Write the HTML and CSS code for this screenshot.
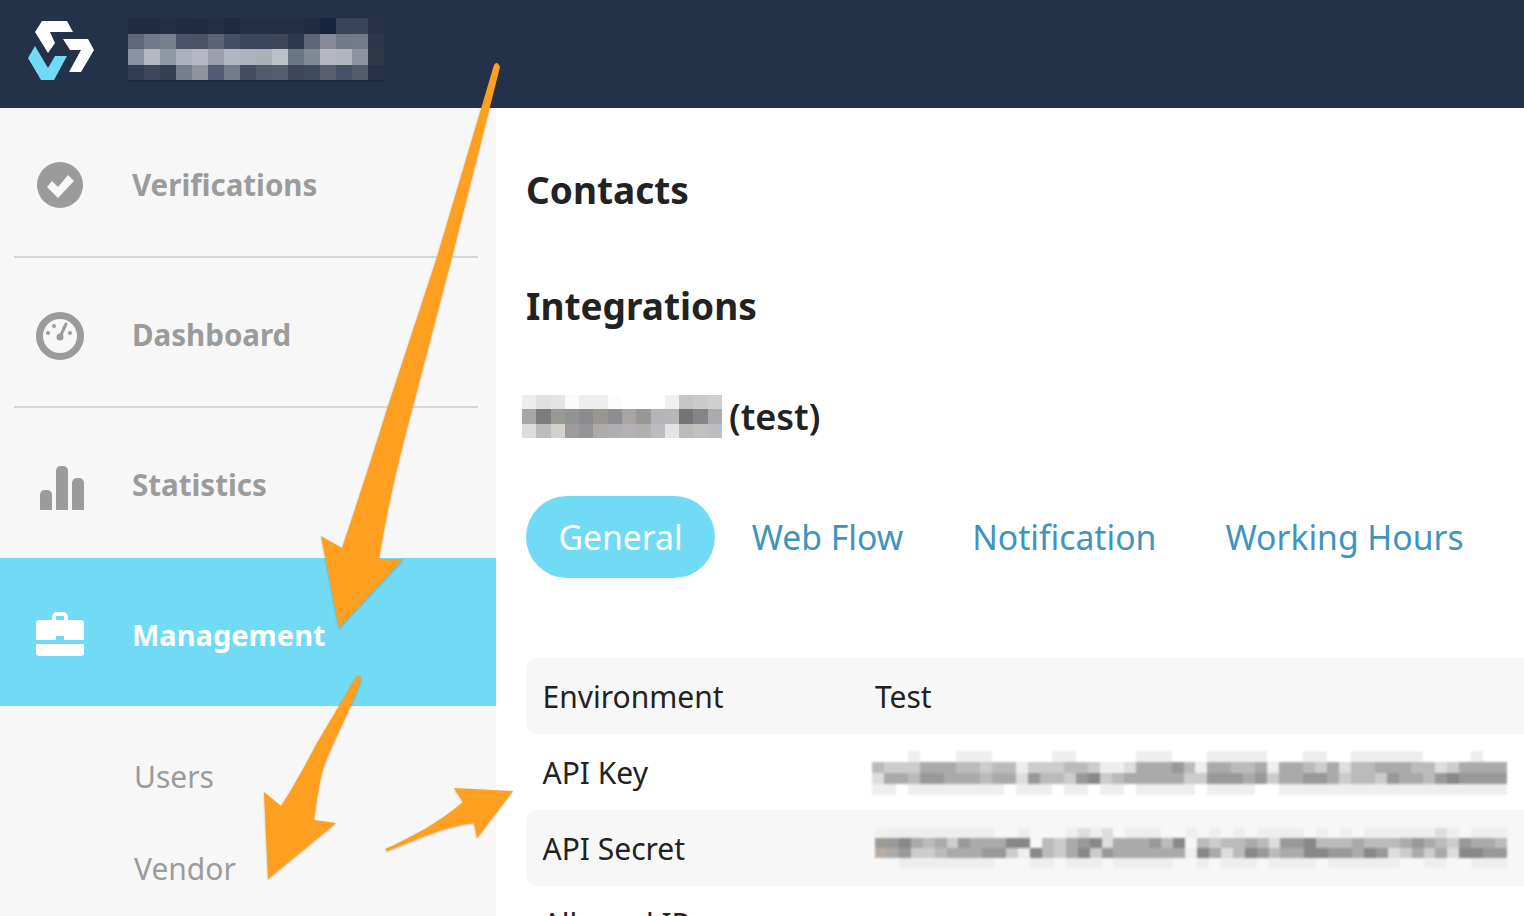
FILE: index.html
```html
<!DOCTYPE html>
<html>
<head>
	<meta charset="UTF-8">
	<title>Integrations</title>
	<link rel="stylesheet" href="styles.css">
</head>
<body>
<div id="topbar">
	<svg class="logo" viewBox="0 0 68 60">
		<polygon fill="#fff" points="14,0 39,0 45,11 22,11 27,22 20,32 7,11"/>
		<polygon fill="#fff" points="35,18 60,18 66,29 53,51 41,51 53,29 42,29"/>
		<polygon fill="#71daf5" points="7,25 20,47 27,35 39,35 26,59 13,59 0,37"/>
	</svg>
	<canvas class="mosaic m-brand" data-rows="1f2c44 1f2c44 222f47 1f2c44 1e2b43 222f47 1c2941 222f47 222f47 222f47 222f47 1f2c44 17243e 39445a 39445a 283149/5f6879 71798a 787f8d 4a5367 4a5366 5a6475 454f63 3a4559 3a4559 3d4759 2c3750 5c6677 868a99 707a89 747b88 2c354a/8a92a1 b5b8c0 8f96a4 adb1bd b5b8c3 9aa1ad b3b7c2 aeb2bc acb1b8 bcc0c8 6b7684 808894 b5b8c2 b0b4bc 8e93a1 2f3849/333c55 3e485c 353f53 747d8c 8f949f 535c72 747b8b 434d60 505a6c 555e70 3d4759 3f4a5c 575f70 465267 535c6d 283149"></canvas>
</div>
<div id="wrap">
	<div id="side">
		<div class="nav">
			<svg class="ico ico-check" viewBox="0 0 48 48">
				<circle cx="24" cy="24" r="23" fill="#9b9b9b"/>
				<polygon fill="#f7f7f7" points="11,26 16,20 22,26 32,14 38,20 22,37"/>
			</svg>
			<span>Verifications</span>
		</div>
		<div class="nav">
			<svg class="ico ico-gauge" viewBox="0 0 48 48">
				<circle cx="24" cy="24" r="20.5" fill="none" stroke="#9b9b9b" stroke-width="7"/>
				<circle cx="12" cy="21" r="2" fill="#9b9b9b"/>
				<circle cx="18" cy="14" r="2" fill="#9b9b9b"/>
				<circle cx="34" cy="21" r="2" fill="#9b9b9b"/>
				<circle cx="24" cy="25" r="3.5" fill="#9b9b9b"/>
				<line x1="24" y1="25" x2="30" y2="12" stroke="#9b9b9b" stroke-width="3" stroke-linecap="round"/>
			</svg>
			<span>Dashboard</span>
		</div>
		<div class="nav noline">
			<svg class="ico ico-bars" viewBox="0 0 48 48">
				<path fill="#9b9b9b" d="M4 46V31a5 5 0 0 1 5-5h2a5 5 0 0 1 5 5v15z"/>
				<path fill="#9b9b9b" d="M20 46V7a5 5 0 0 1 5-5h2a5 5 0 0 1 5 5v39z"/>
				<path fill="#9b9b9b" d="M36 46V19a5 5 0 0 1 5-5h2a5 5 0 0 1 5 5v27z"/>
			</svg>
			<span>Statistics</span>
		</div>
		<div class="nav active">
			<svg class="ico" viewBox="0 0 48 48">
				<path fill="#fff" fill-rule="evenodd" d="M16 10V7a5 5 0 0 1 5-5h6a5 5 0 0 1 5 5v3h13a3 3 0 0 1 3 3v17H28v-4h-8v4H0V13a3 3 0 0 1 3-3zM20 10h8V6h-8z"/>
				<path fill="#fff" d="M0 34h48v9a3 3 0 0 1-3 3H3a3 3 0 0 1-3-3z"/>
			</svg>
			<span>Management</span>
		</div>
		<ul class="sub">
			<li>Users</li>
			<li>Vendor</li>
		</ul>
	</div>
	<div id="main">
		<h2>Contacts</h2>
		<h2 class="second">Integrations</h2>
		<div class="name">
			<canvas class="mosaic m-name" data-rows="ececec e0e0e0 e4e4e2 fafafa eeeeee eeeeee fbfcfc fff fff fff f0f0f0 c6c6c6 cacaca cfcfcf/a8a5a5 7c7c7c 999994 919394 8e8b8e 9a9692 8e8d91 a9a5a5 9a9693 b4b3b8 b8b6b9 747477 858587 aaacac/dcdcdc bcbcbc d0d2cc a09a9a 95949a aeaaa8 adafb2 b2b2b6 b0b0ae bcbcbe e4e4e2 bbbbbb c0c0bc bcbcc2"></canvas>
			<span>(test)</span>
		</div>
		<ul id="tabs">
			<li class="on">General</li>
			<li>Web Flow</li>
			<li>Notification</li>
			<li>Working Hours</li>
		</ul>
		<div class="rows">
			<div class="row"><span class="k">Environment</span><span>Test</span></div>
			<div class="row">
				<span class="k">API Key</span>
				<canvas class="mosaic m-key" data-rows="fff fff fff eee fff fff fff eee eee eee fff fff fff fff fff eee eee fff fff fff fff fff eee eee eee fff fff fff eee eee eee eee eee fff fff fff eee eee fff fff eee eee eee eee eee eee fff fff fff fff eee fff fff/bbb ccc ccc ccc aaa aaa aaa bbb bbb ccc bbb bbb eee ccc ccc ccc bbb bbb ccc eee eee ddd aaa aaa aaa 999 bbb eee aaa aaa bbb bbb aaa eee aaa aaa bbb ccc aaa ddd bbb bbb aaa aaa aaa bbb bbb ddd ccc aaa aaa aaa aaa/ddd aaa aaa bbb 999 999 aaa aaa aaa bbb aaa aaa ddd 999 bbb bbb ccc 999 888 ccc bbb aaa aaa aaa aaa aaa ccc ccc 999 999 999 aaa 999 ccc aaa aaa 999 999 aaa ccc bbb bbb ccc 999 aaa aaa bbb 999 888 999 999 999 999/eee eee fff eee eee eee eee eee eee eee eee fff eee eee eee fff eee eee fff eee eee fff eee eee eee eee eee fff eee eee eee eee fff fff eee eee eee eee eee eee eee eee eee eee eee eee eee eee eee eee eee eee eee"></canvas>
			</div>
			<div class="row">
				<span class="k">API Secret</span>
				<canvas class="mosaic m-secret" data-rows="f0f0f0 eee eee eee eee eee eee eee eee eee f7f7f7 f7f7f7 eee f7f7f7 f7f7f7 f7f7f7 eee ddd eee ddd f7f7f7 eee eee eee f7f7f7 f7f7f7 eee f7f7f7 eee f7f7f7 eee f7f7f7 eee eee eee eee f7f7f7 eee f7f7f7 eee f7f7f7 eee eee eee eee eee eee ddd eee f7f7f7 eee eee eee/a09a95 999 888 aaa bbb aaa ccc 999 aaa aaa aaa 888 888 f7f7f7 bbb ccc aaa 999 888 ddd aaa aaa aaa 999 bbb 888 f7f7f7 bbb ccc bbb bbb aaa bbb ddd 999 999 888 bbb bbb bbb aaa bbb bbb bbb aaa 999 aaa bbb ccc 999 aaa aaa bbb/b8ada5 aaa 999 ccc ccc bbb aaa aaa aaa 999 999 ccc eee 888 bbb ccc aaa 888 ccc 999 aaa aaa aaa aaa aaa aaa eee 888 aaa ddd bbb 888 999 bbb aaa aaa 888 888 999 999 aaa 888 999 ddd ccc aaa ccc aaa ddd 888 888 999 999/f7f7f7 f7f7f7 eee eee eee eee eee eee eee eee f7f7f7 f7f7f7 f7f7f7 eee eee f7f7f7 eee eee eee f7f7f7 eee eee eee eee eee f7f7f7 f7f7f7 eee f7f7f7 eee eee eee f7f7f7 eee eee eee eee f7f7f7 eee eee eee eee eee eee f7f7f7 f7f7f7 eee eee f7f7f7 f7f7f7 eee eee eee"></canvas>
			</div>
			<div class="row plain"><span class="k">Allowed IP</span></div>
		</div>
	</div>
</div>
<svg id="arrows" viewBox="0 0 1524 916">
	<path d="M494 65Q497 60 500 67L452 257 413 406Q390 490 379 559H403L339 628 321 536 342 548Q365 480 388 406L437 257z"/>
	<path d="M356 677Q360 673 361 680C348 717 328 750 322 773 318 790 316 805 314 820L336 823 268 879 264 792 281 806C295 785 305 765 317 743z"/>
	<path d="M385 849C410 838 440 822 463 802L454 788 513 791 477 838 474 823C445 826 415 840 387 851z"/>
</svg>
<script type="text/javascript" src="mosaic.js"></script>
</body>
</html>
```
FILE: styles.css
```css
body,ul,li,h2{
	padding: 0;
	margin: 0;
}
li{
	list-style:none;
}
html,body{
	height:916px;
	overflow:hidden;
}
body{
	font-family:"Noto Sans","Liberation Sans",sans-serif;
	background:#fff;
	color:#222;
}

#topbar{
	height:108px;
	box-sizing:border-box;
	padding:18px 0 0 28px;
	background:#233149;
	display:flex;
	align-items:flex-start;
}
.logo{
	width:68px;
	height:60px;
	margin:3px 0 0 0;
}
.mosaic{
	display:block;
	image-rendering:pixelated;
	filter:blur(.6px);
}
.m-brand{
	width:256px;
	height:62px;
	margin-left:32px;
	border-bottom:2px solid #1c2840;
}

#wrap{
	display:flex;
	height:808px;
}
#side{
	width:496px;
	flex:none;
	background:#f7f7f7;
}
.nav{
	height:150px;
	box-sizing:border-box;
	margin:0 18px 0 14px;
	padding:4px 0 0 22px;
	border-bottom:2px solid #d8d8d8;
	display:flex;
	align-items:center;
	gap:48px;
	font-size:29.5px;
	font-weight:700;
	color:#9b9b9b;
}
.noline{
	padding-top:2px;
	border-bottom:0;
}
.nav.active{
	height:148px;
	margin:0;
	padding-left:36px;
	border-bottom:0;
	background:#71daf5;
	color:#fff;
	font-size:29px;
}
.ico{
	width:48px;
	height:48px;
	flex:none;
}
.ico-check{
	margin-top:2px;
}
.ico-gauge{
	margin-top:4px;
}
.ico-bars{
	margin-top:8px;
}
.sub{
	padding:25px 0 0 134px;
}
.sub li{
	height:92px;
	line-height:92px;
	font-size:30px;
	color:#9b9b9b;
}

#main{
	flex:1;
	min-width:0;
	padding:59px 0 0 30px;
}
h2{
	height:46px;
	line-height:46px;
	font-size:37px;
	font-weight:700;
}
.second{
	margin-top:70px;
}
.name{
	height:44px;
	line-height:47px;
	margin:65px 0 0 -4px;
	display:flex;
	align-items:center;
	gap:7px;
	font-size:36px;
	font-weight:600;
}
.m-name{
	width:200px;
	height:43px;
}
#tabs{
	margin-top:58px;
	display:flex;
	gap:4px;
	font-size:33.7px;
	color:#3f93bd;
}
#tabs li{
	height:82px;
	line-height:82px;
	padding:0 32.5px;
	border-radius:41px;
}
#tabs .on{
	background:#71daf5;
	color:#fff;
}

.rows{
	margin-top:80px;
	font-size:30px;
}
.row{
	height:76px;
	padding-left:16.5px;
	display:flex;
	align-items:center;
	border-radius:12px 0 0 12px;
}
.row:nth-child(odd){
	background:#f7f7f7;
}
.row.plain{
	background:none;
	align-items:flex-start;
	padding-top:17px;
}
.k{
	width:332.5px;
	flex:none;
}
.m-key{
	width:635px;
	height:44px;
	margin:2px 0 0 -3px;
	filter:blur(1.2px);
}
.m-secret{
	width:632px;
	height:40px;
	filter:blur(1.2px);
}

#arrows{
	position:absolute;
	left:0;
	top:0;
	width:1524px;
	height:916px;
	fill:#ff9f1f;
	filter:drop-shadow(0 1px 1px rgba(90,70,30,.35));
}
```
FILE: mosaic.js
```js
// paints the pixelated blocks from their data-rows colours
var list = document.querySelectorAll(".mosaic");
for(var n = 0;n<list.length;n++){
	var rows = list[n].getAttribute("data-rows").split("/");
	var cells = rows[0].split(" ");
	list[n].width = cells.length;
	list[n].height = rows.length;
	var ctx = list[n].getContext("2d");
	for(var y = 0;y<rows.length;y++){
		var row = rows[y].split(" ");
		for(var x = 0;x<row.length;x++){
			ctx.fillStyle = "#"+row[x];
			ctx.fillRect(x,y,1,1);
		}
	}
}
```
